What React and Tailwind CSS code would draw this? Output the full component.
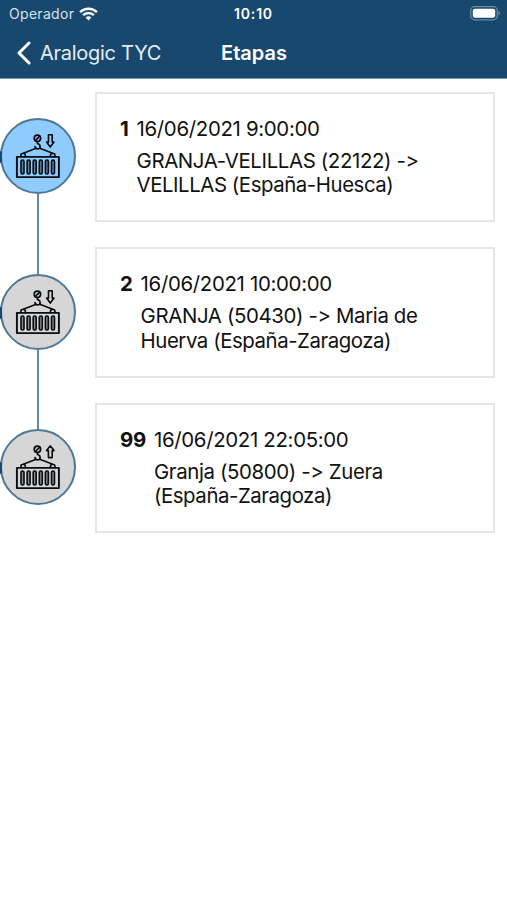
const etapas = [
    { id: 1, fecha: '16/06/2021 9:00:00', ruta: ['GRANJA-VELILLAS (22122) ->', 'VELILLAS (España-Huesca)'], activa: true, carga: false },
    { id: 2, fecha: '16/06/2021 10:00:00', ruta: ['GRANJA (50430) -> Maria de', 'Huerva (España-Zaragoza)'], activa: false, carga: false },
    { id: 99, fecha: '16/06/2021 22:05:00', ruta: ['Granja (50800) -> Zuera', '(España-Zaragoza)'], activa: false, carga: true },
];

function WifiIcon() {
    return (
        <svg className="w-[19px] h-[14px]" viewBox="0 0 19 14" fill="none" stroke="white" strokeWidth="2.5">
            <path d="M1.1 5.2C5.8.5 13.2.5 17.9 5.2" />
            <path d="M4.1 8.2c3-3 7.8-3 10.8 0" />
            <path d="M6.7 10.4c1.6-1.5 4-1.5 5.6 0l-2.8 3z" fill="white" stroke="none" />
        </svg>
    );
}

function BatteryIcon() {
    return (
        <svg className="w-[30px] h-[15px]" viewBox="0 0 30 15" fill="none">
            <rect x="0.7" y="0.7" width="26.6" height="13.1" rx="4" stroke="#648aa5" strokeWidth="1.3" />
            <rect x="2.8" y="2.7" width="22.4" height="9" rx="2" fill="white" />
            <path d="M28.5 5v4.5c1-.3 1.5-1.2 1.5-2.25S29.5 5.3 28.5 5z" fill="#648aa5" />
        </svg>
    );
}

function ContainerIcon({ carga }) {
    return (
        <svg className="size-[76px] shrink-0" viewBox="0 0 76 76" fill="none" stroke="#080d12" strokeWidth="1.7" strokeLinejoin="round" strokeLinecap="round">
            <rect x="16.9" y="38.9" width="42" height="20.2" strokeWidth="1.9" />
            {[22.5, 28.6, 34.7, 40.8, 46.9, 53].map((x) => (
                <rect key={x} x={x - 1.5} y="42" width="3" height="14" rx="1.4" strokeWidth="1.6" fill="#080d12" fillOpacity="0.4" />
            ))}
            <path d="M20.9 38.5v-1.6q0-1.4 1.4-1.4h1.6q1.4 0 1.4 1.4v1.6M50.5 38.5v-1.6q0-1.4 1.4-1.4h1.6q1.4 0 1.4 1.4v1.6" />
            <path d="M23.3 35.2 36.2 30.3M52.7 35.2 39.8 30.3" strokeWidth="1.6" />
            <circle cx="37.4" cy="20.3" r="3.2" />
            <path d="m36 21.8 2.9-2.9M37.4 23.6v1.6l2.3 1.7q1.4 3.9-1.9 3.9-2.6 0-2.8-2.3" />
            <path
                d={carga
                    ? 'M50.3 16.8l3.7 4.8h-1.8v7h-3.8v-7h-1.8z'
                    : 'M48.5 16.8h3.7v7.300h1.800l-3.700 5-3.700-5h1.900z'}
                strokeWidth="1.6"
            />
        </svg>
    );
}

function Etapa({ etapa, ultima }) {
    return (
        <li className="flex h-[155.7px]">
            <div className="flex w-[95px] shrink-0 flex-col pt-[26.5px]">
                <div className={`relative flex size-[76px] shrink-0 items-center justify-center rounded-full border-2 border-[#4e7895] ${etapa.activa ? 'bg-[#8fcbfd]' : 'bg-[#d6d6d6]'}`}>
                    <ContainerIcon carga={etapa.carga} />
                    <span className="absolute -left-[2px] top-[31px] h-[12px] w-[1.5px] rounded-r bg-[#174a70]" />
                </div>
                {!ultima && <div className="ml-[37px] h-[80px] w-[2px] shrink-0 bg-[#648ba1]" />}
            </div>
            <div className="flex h-[130.5px] w-[400px] items-start border-2 border-[#e6e6e6] bg-white pl-[23px] pt-[22px] text-[20.4px] leading-[25px] tracking-[-0.32px] text-[#111111]">
                <span className="pr-[8px] font-bold tracking-[-0.25px]">{etapa.id}</span>
                <div>
                    <p>{etapa.fecha}</p>
                    <p className="mt-[8px] whitespace-nowrap leading-[24.5px] tracking-[-0.36px]">
                        {etapa.ruta[0]}
                        <br />
                        <span className="tracking-[-0.44px]">{etapa.ruta[1]}</span>
                    </p>
                </div>
            </div>
        </li>
    );
}

export default function App() {
    return (
        <div className="min-h-[900px] w-[507px] overflow-hidden bg-white font-['Inter',sans-serif] [font-feature-settings:'calt'_0]">
            <header className="h-[79px] border-b border-[#7898ae] bg-[#18486d] text-white">
                <div className="grid h-[27px] grid-cols-3 items-center text-[14px]">
                    <div className="flex items-center gap-[5px] pl-[9px] text-[#d5e1ea]">
                        <span className="tracking-[0.3px]">Operador</span>
                        <WifiIcon />
                    </div>
                    <span className="text-center font-semibold tracking-[0.8px]">10:10</span>
                    <div className="flex justify-end pr-[7px]">
                        <BatteryIcon />
                    </div>
                </div>
                <div className="grid h-[51px] grid-cols-[1fr_auto_1fr] items-center text-[20px]">
                    <button className="flex items-center gap-[9px] pl-[17px] text-[#e2edf5]">
                        <svg className="h-[24px] w-[14px]" viewBox="0 0 14 24" fill="none" stroke="white" strokeWidth="3" strokeLinecap="round" strokeLinejoin="round">
                            <path d="M12 2 2 12l10 10" />
                        </svg>
                        <span className="tracking-[-0.27px]">Aralogic TYC</span>
                    </button>
                    <h1 className="pl-px font-semibold">Etapas</h1>
                </div>
            </header>
            <ul className="pt-[12.5px]">
                {etapas.map((etapa, i) => (
                    <Etapa key={etapa.id} etapa={etapa} ultima={i === etapas.length - 1} />
                ))}
            </ul>
        </div>
    );
}
